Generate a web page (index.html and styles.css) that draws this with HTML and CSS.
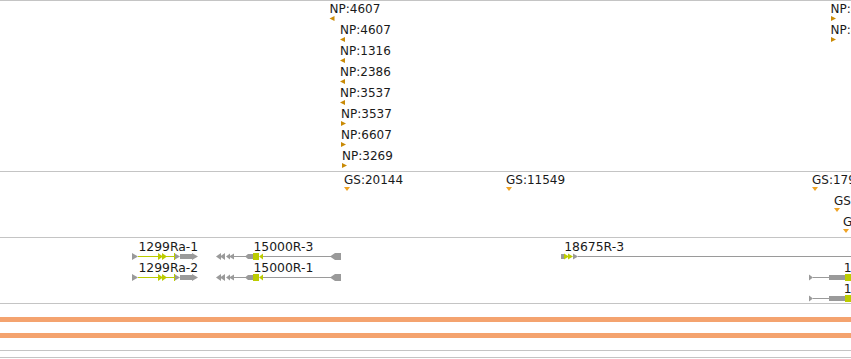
FILE: index.html
```html
<!DOCTYPE html>
<html lang="en">
<head>
    <meta charset="UTF-8">
    <title>Tracks</title>
    <link rel="stylesheet" href="styles.css">
</head>
<body>

<div class="tracks">

    <!-- NP features -->
    <div class="track track-np">
        <svg width="851" height="170" viewBox="0 1 851 170">
            <text x="329.5" y="13">NP:4607</text>
            <polygon class="np-mark" points="329.5,18.5 334.5,16 334.5,21"/>
            <text x="340" y="34">NP:4607</text>
            <polygon class="np-mark" points="340,39.5 345,37 345,42"/>
            <text x="340" y="55">NP:1316</text>
            <polygon class="np-mark" points="340,60.5 345,58 345,63"/>
            <text x="340" y="76">NP:2386</text>
            <polygon class="np-mark" points="340,81.5 345,79 345,84"/>
            <text x="340" y="97">NP:3537</text>
            <polygon class="np-mark" points="340,102.5 345,100 345,105"/>
            <text x="341" y="118">NP:3537</text>
            <polygon class="np-mark" points="341,121 346,123.5 341,126"/>
            <text x="341" y="139">NP:6607</text>
            <polygon class="np-mark" points="341,142 346,144.5 341,147"/>
            <text x="342" y="160">NP:3269</text>
            <polygon class="np-mark" points="342,163 347,165.5 342,168"/>

            <text x="830.5" y="13">NP:4215</text>
            <polygon class="np-mark" points="831,16 836,18.5 831,21"/>
            <text x="830.5" y="34">NP:4215</text>
            <polygon class="np-mark" points="831,37 836,39.5 831,42"/>
        </svg>
    </div>

    <!-- GS features -->
    <div class="track track-gs">
        <svg width="851" height="65" viewBox="0 172 851 65">
            <text x="344" y="184">GS:20144</text>
            <polygon class="gs-mark" points="344,187 350,187 347,191"/>
            <text x="506" y="184">GS:11549</text>
            <polygon class="gs-mark" points="506,187 512,187 509,191"/>
            <text x="812" y="184">GS:17953</text>
            <polygon class="gs-mark" points="812,187 818,187 815,191"/>
            <text x="834" y="205">GS:17960</text>
            <polygon class="gs-mark" points="834,208 840,208 837,212"/>
            <text x="843" y="226">GS:18002</text>
            <polygon class="gs-mark" points="843,229 849,229 846,233"/>
        </svg>
    </div>

    <!-- gene models -->
    <div class="track track-genes">
        <svg width="851" height="65" viewBox="0 238 851 65">
            <defs>
                <g id="g1299">
                    <polygon class="utr" points="132,253 138,256.5 132,260"/>
                    <line class="cds-line" x1="138" y1="256.5" x2="174" y2="256.5"/>
                    <polygon class="cds" points="158,253 163,256.5 158,260"/>
                    <polygon class="cds" points="162,253 167,256.5 162,260"/>
                    <rect class="cds" x="174" y="253" width="1" height="7"/>
                    <polygon class="utr" points="175,253.5 180,256.5 175,259.5"/>
                    <rect class="utr" x="180" y="254" width="12" height="5"/>
                    <polygon class="utr" points="192,253 198,256.5 192,260"/>
                </g>
                <g id="g15000">
                    <polygon class="utr" points="216,256.5 221,253 221,260"/>
                    <polygon class="utr" points="220,256.5 225,253 225,260"/>
                    <polygon class="utr" points="226,256.5 230,253.5 230,259.5"/>
                    <polygon class="utr" points="229,256.5 234,253.5 234,259.5"/>
                    <line class="intron" x1="234" y1="256.5" x2="246" y2="256.5"/>
                    <polygon class="utr" points="245,256.5 248,254 248,259"/>
                    <rect class="utr" x="248" y="254" width="5" height="5"/>
                    <rect class="cds" x="253" y="253" width="6" height="7"/>
                    <polygon class="cds" points="259,256.5 263,253.5 263,259.5"/>
                    <line class="intron" x1="263" y1="256.5" x2="331" y2="256.5"/>
                    <polygon class="utr" points="330,256.5 335,253 335,260"/>
                    <rect class="utr" x="335" y="253" width="6" height="7"/>
                </g>
                <g id="gRight">
                    <polygon class="utr" points="809,253.5 813,256.5 809,259.5"/>
                    <line class="intron" x1="813" y1="256.5" x2="829" y2="256.5"/>
                    <rect class="utr" x="829" y="254" width="16" height="5"/>
                    <rect class="cds" x="845" y="253" width="8" height="7"/>
                </g>
            </defs>

            <text class="gene-label" x="138.4" y="251">1299Ra-1</text>
            <use href="#g1299"/>
            <text class="gene-label" x="138.4" y="272">1299Ra-2</text>
            <use href="#g1299" y="21"/>

            <text class="gene-label" x="253.4" y="251">15000R-3</text>
            <use href="#g15000"/>
            <text class="gene-label" x="253.4" y="272">15000R-1</text>
            <use href="#g15000" y="21"/>

            <text class="gene-label" x="564.2" y="251">18675R-3</text>
            <rect class="utr" x="561" y="254" width="3" height="5"/>
            <polygon class="cds" points="564,253.5 569,256.5 564,259.5"/>
            <polygon class="cds" points="568,253.5 573,256.5 568,259.5"/>
            <polygon class="utr" points="573,253.5 578,256.5 573,259.5"/>
            <line class="intron" x1="578" y1="256.5" x2="851" y2="256.5"/>

            <text class="gene-label" x="843.8" y="272">18675R-1</text>
            <use href="#gRight" y="21"/>
            <text class="gene-label" x="843.8" y="293">18675R-2</text>
            <use href="#gRight" y="42"/>
        </svg>
    </div>

    <!-- coverage -->
    <div class="track track-cover">
        <div class="cover-bar"></div>
        <div class="cover-bar"></div>
    </div>

    <div class="track track-empty"></div>
    <div class="track track-empty"></div>
</div>

</body>
</html>
```

FILE: styles.css
```css
body {
    margin: 0;
    background: #fff;
    font-family: "DejaVu Sans", sans-serif;
    overflow: hidden;
}
.tracks {
    width: 851px;
    overflow: hidden;
}
.track {
    border-top: 1px solid #c4c4c4;
    overflow: hidden;
}
.track svg {
    display: block;
}
.track text {
    font-family: "DejaVu Sans", sans-serif;
    font-size: 12px;
    fill: #1a1a1a;
}
.track .gene-label {
    font-size: 12.4px;
}
.track-np {
    height: 170px;
}
.track-gs {
    height: 65px;
}
.track-genes {
    height: 65px;
}
.track-cover {
    height: 47px;
    display: flex;
    flex-direction: column;
    gap: 11px;
    padding-top: 13px;
    box-sizing: border-box;
}
.cover-bar {
    height: 5px;
    background-color: #f4a36f;
}
.track-empty {
    height: 6px;
}
.np-mark {
    fill: #c98a06;
}
.gs-mark {
    fill: #f0a324;
}
.utr {
    fill: #9a9a9a;
}
.cds {
    fill: #bccc00;
}
.cds-line {
    stroke: #bccc00;
    stroke-width: 1;
}
.intron {
    stroke: #9a9a9a;
    stroke-width: 1;
}
```
